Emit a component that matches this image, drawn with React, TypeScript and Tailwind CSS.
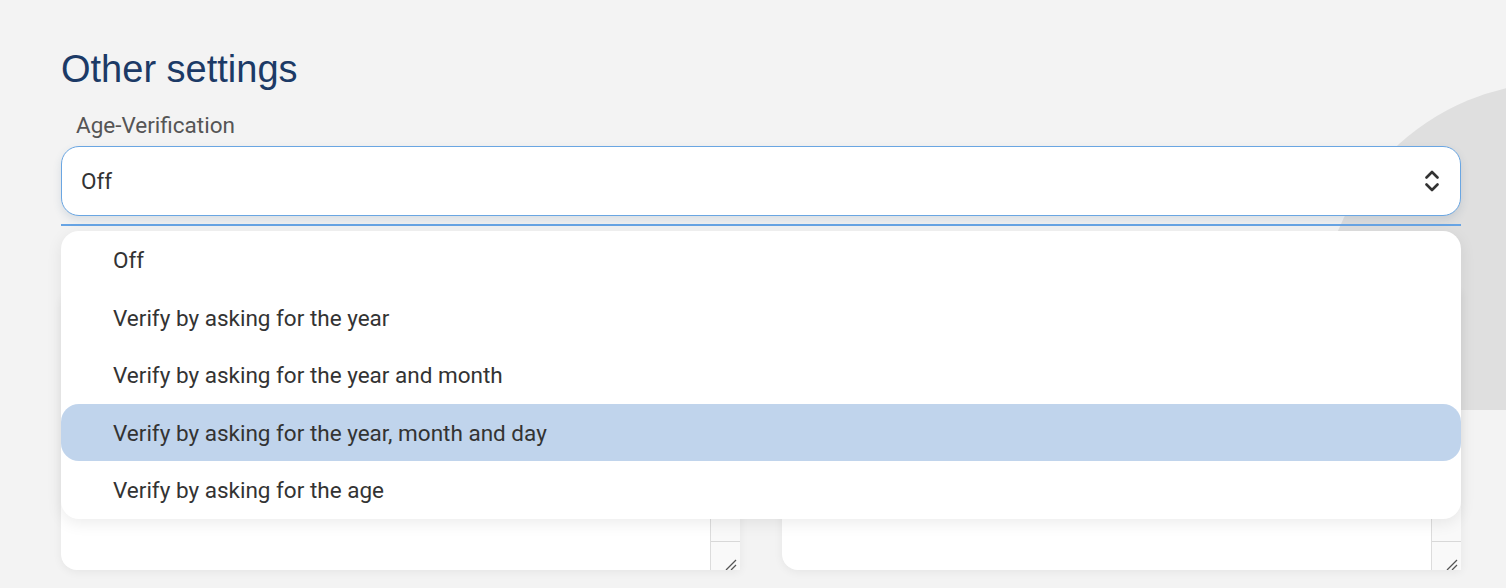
import React from "react";

const options = [
  "Off",
  "Verify by asking for the year",
  "Verify by asking for the year and month",
  "Verify by asking for the year, month and day",
  "Verify by asking for the age",
];

function Grip() {
  return (
    <svg width="14" height="14" viewBox="0 0 14 14" className="absolute right-[2px] bottom-0">
      <path d="M2 14 L12 4" stroke="#555" strokeWidth="1.3" />
      <path d="M7 14 L12 9" stroke="#555" strokeWidth="1.3" />
    </svg>
  );
}

function Card() {
  return (
    <div className="relative h-[280px] bg-white rounded-2xl rounded-br-none rounded-tr-none shadow-[0_2px_10px_rgba(0,0,0,0.06)] flex justify-end overflow-hidden">
      <div className="relative w-[30px] h-full bg-[#f9f9f9] border-l border-[#dcdcdc] flex flex-col justify-end">
        <div className="relative h-[29px] border-t border-[#d8d8d8]">
          <Grip />
        </div>
      </div>
    </div>
  );
}

export default function App() {
  return (
    <div
      className="relative min-h-screen w-full bg-[#f3f3f3] overflow-hidden"
      style={{ fontFamily: "Roboto, 'Noto Sans', sans-serif" }}
    >
      <div className="absolute left-0 top-0 w-full h-[410px] overflow-hidden pointer-events-none">
        <div className="absolute left-[1320px] top-[82px] w-[480px] h-[480px] rounded-full bg-[#dfdfdf]" />
      </div>

      <div className="relative px-[61px] pt-[47px] w-[1522px] pr-[45px] box-border">
        <h1
          className="text-[38px] leading-[44px] text-[#1c3a66] font-normal"
          style={{ fontFamily: "'Liberation Sans', Arial, sans-serif" }}
        >
          Other settings
        </h1>
        <div className="mt-[20px] ml-[15px] text-[22.5px] leading-[28px] text-[#555]">
          Age-Verification
        </div>

        <div className="relative mt-[7px] w-[1400px]">
          <div className="h-[70px] bg-white border border-[#6aa6e2] rounded-[18px] shadow-[0_4px_8px_rgba(60,90,130,0.14)] flex items-center justify-between pl-[19px] pr-[21px]">
            <span className="text-[22.5px] text-[#333] pt-[1px]">Off</span>
            <svg width="14" height="24" viewBox="0 0 14 24" fill="none">
              <path d="M1.5 8.5 L7 3 L12.5 8.5" stroke="#333" strokeWidth="2.6" strokeLinecap="round" strokeLinejoin="round" />
              <path d="M1.5 15.5 L7 21 L12.5 15.5" stroke="#333" strokeWidth="2.6" strokeLinecap="round" strokeLinejoin="round" />
            </svg>
          </div>
          <div className="mt-[8px] h-[2px] bg-[#67a4e4]" />

          <div className="grid grid-cols-[679px_679px] gap-x-[42px] mt-[64px]">
            <Card />
            <Card />
          </div>

          <div className="absolute left-0 top-[85px] w-[1400px] bg-white rounded-[18px] shadow-[0_4px_16px_rgba(0,0,0,0.08)] flex flex-col">
            {options.map((o, i) => (
              <div
                key={o}
                className={
                  "h-[57.5px] flex items-center pl-[52px] pt-[3px] text-[22.5px] text-[#333] rounded-[18px] " +
                  (i === 3 ? "bg-[#c0d4ec]" : "")
                }
              >
                {o}
              </div>
            ))}
          </div>
        </div>
      </div>
    </div>
  );
}
